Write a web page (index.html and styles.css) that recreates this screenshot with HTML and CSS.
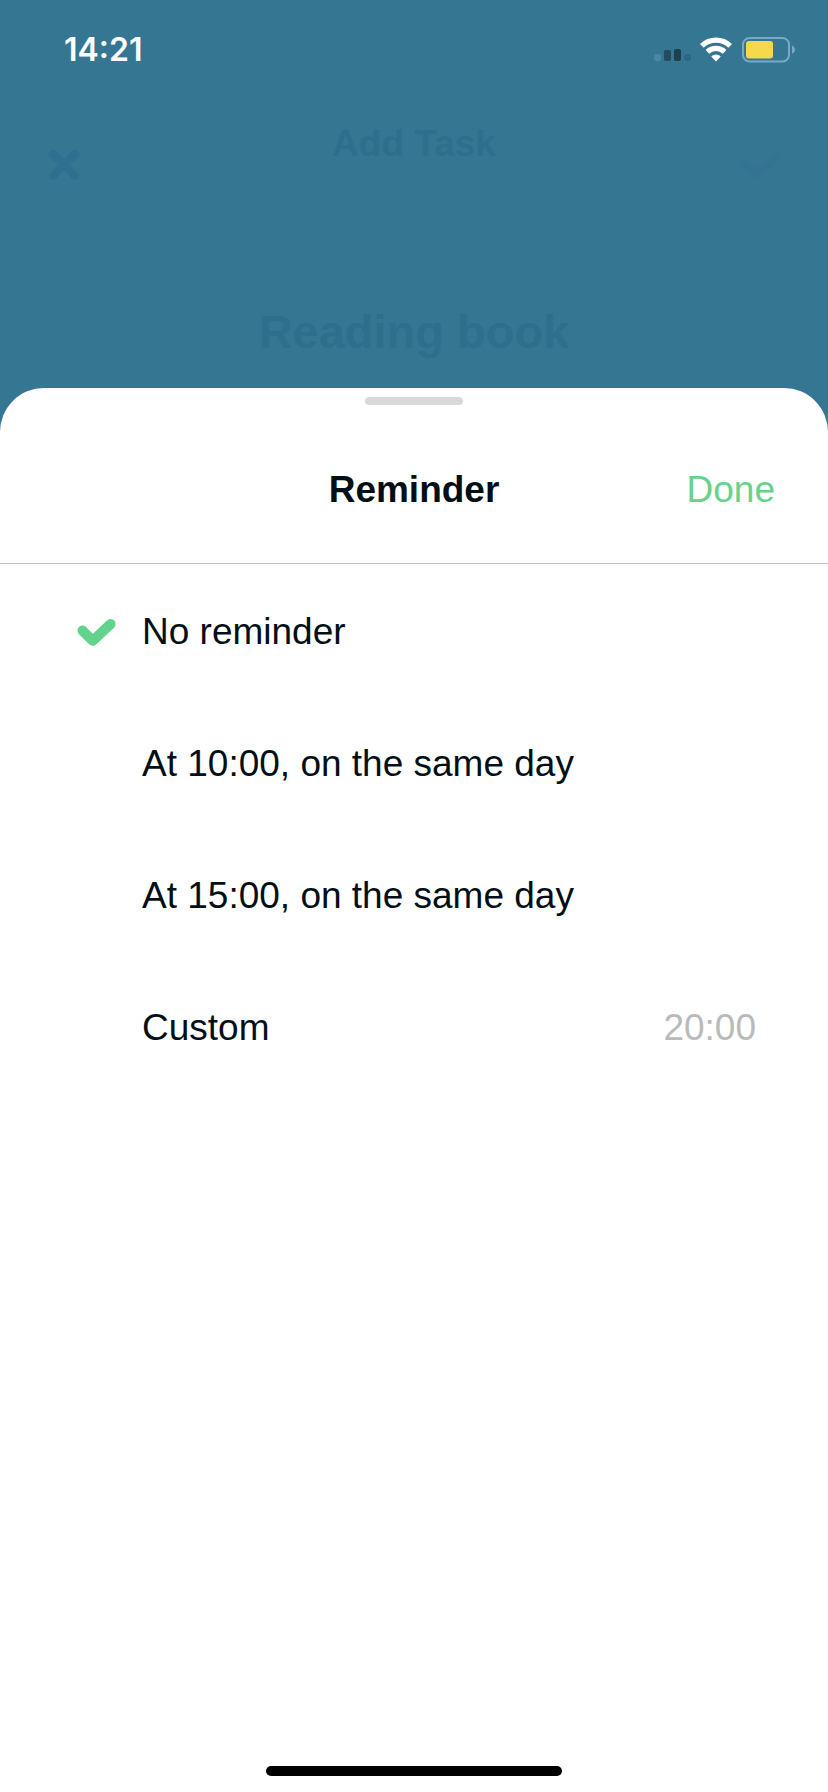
FILE: index.html
```html
<!DOCTYPE html>
<html lang="en">
<head>
<meta charset="utf-8">
<meta name="viewport" content="width=device-width, initial-scale=1">
<title>Reminder</title>
<link rel="stylesheet" href="styles.css">
</head>
<body>
<div class="screen">
  <header class="status-bar">
    <time class="clock">14:21</time>
    <div class="status-icons">
      <svg class="signal" width="38" height="26" viewBox="0 0 38 26" aria-hidden="true">
        <rect x="0" y="17" width="7" height="7" rx="2" fill="#4a87a3"/>
        <rect x="10" y="13" width="7" height="11" rx="2" fill="#234c60"/>
        <rect x="20" y="12" width="7" height="12" rx="2" fill="#1d3f50"/>
        <rect x="30" y="17" width="7" height="7" rx="3" fill="#2c6684"/>
      </svg>
      <svg class="wifi" width="32" height="26" viewBox="0 0 32 26" aria-hidden="true">
        <g fill="none" stroke="#fff" stroke-width="5.2">
          <path d="M1.8 8.8A20.4 20.4 0 0 1 30.2 8.8"/>
          <path d="M7.4 14.8A12.4 12.4 0 0 1 24.6 14.8"/>
        </g>
        <path d="M16 24.6L11.2 19.4A6.8 6.8 0 0 1 20.8 19.4Z" fill="#fff"/>
      </svg>
      <svg class="battery" width="54" height="26" viewBox="0 0 54 26" aria-hidden="true">
        <rect x="1" y="1" width="46" height="23.4" rx="6.5" fill="none" stroke="#78aac5" stroke-width="2"/>
        <rect x="4" y="4" width="27" height="17.4" rx="3" fill="#f5d94b"/>
        <path d="M50 8.6C54 10.4 54 15 50 16.8Z" fill="#78aac5"/>
      </svg>
    </div>
  </header>

  <section class="task">
    <div class="task-bar">
      <button class="task-action" type="button" aria-label="Close">
        <svg width="36" height="36" viewBox="0 0 36 36" aria-hidden="true">
          <path d="M7 7L29 29M29 7L7 29" fill="none" stroke="#2f6f90" stroke-width="8" stroke-linecap="round"/>
        </svg>
      </button>
      <h1 class="task-heading">Add Task</h1>
      <button class="task-action" type="button" aria-label="Save">
        <svg width="44" height="36" viewBox="0 0 44 36" aria-hidden="true">
          <path d="M6 17L19 27L38 11" fill="none" stroke="#347492" stroke-width="8" stroke-linecap="round" stroke-linejoin="round"/>
        </svg>
      </button>
    </div>
    <p class="task-name">Reading book</p>
  </section>

  <main class="sheet">
    <div class="handle"></div>
    <div class="sheet-header">
      <h2 class="sheet-title">Reminder</h2>
      <button class="done" type="button">Done</button>
    </div>
    <form class="options">
      <div class="option">
        <input class="option-radio" type="radio" name="reminder" id="none" checked>
        <label class="option-label" for="none">
          <svg class="tick" width="40" height="32" viewBox="0 0 40 32" aria-hidden="true">
            <path d="M6.5 14.6L16.7 24.8L34.6 8" fill="none" stroke="#62d38c" stroke-width="10" stroke-linecap="round" stroke-linejoin="round"/>
          </svg>
          <span>No reminder</span>
        </label>
      </div>
      <div class="option">
        <input class="option-radio" type="radio" name="reminder" id="ten">
        <label class="option-label" for="ten">
          <svg class="tick" width="40" height="32" viewBox="0 0 40 32" aria-hidden="true">
            <path d="M6.5 14.6L16.7 24.8L34.6 8" fill="none" stroke="#62d38c" stroke-width="10" stroke-linecap="round" stroke-linejoin="round"/>
          </svg>
          <span>At 10:00, on the same day</span>
        </label>
      </div>
      <div class="option">
        <input class="option-radio" type="radio" name="reminder" id="fifteen">
        <label class="option-label" for="fifteen">
          <svg class="tick" width="40" height="32" viewBox="0 0 40 32" aria-hidden="true">
            <path d="M6.5 14.6L16.7 24.8L34.6 8" fill="none" stroke="#62d38c" stroke-width="10" stroke-linecap="round" stroke-linejoin="round"/>
          </svg>
          <span>At 15:00, on the same day</span>
        </label>
      </div>
      <div class="option">
        <input class="option-radio" type="radio" name="reminder" id="custom">
        <label class="option-label" for="custom">
          <svg class="tick" width="40" height="32" viewBox="0 0 40 32" aria-hidden="true">
            <path d="M6.5 14.6L16.7 24.8L34.6 8" fill="none" stroke="#62d38c" stroke-width="10" stroke-linecap="round" stroke-linejoin="round"/>
          </svg>
          <span>Custom</span>
        </label>
        <button class="custom-time" type="button">20:00</button>
      </div>
    </form>
    <div class="home-indicator"></div>
  </main>
</div>
</body>
</html>
```

FILE: styles.css
```css
* {
  box-sizing: border-box;
}

body {
  margin: 0;
  background: #357693;
  color: #030f16;
  font-family: "Liberation Sans", Arial, sans-serif;
  font-size: 37px;
  line-height: 44px;
}

button {
  padding: 0;
  border: 0;
  background: none;
  color: inherit;
  font: inherit;
  cursor: pointer;
}

svg {
  display: block;
  flex: none;
}

h1,
h2,
p {
  margin: 0;
  font-size: inherit;
}

.screen {
  display: flex;
  flex-direction: column;
  min-height: 100vh;
}

.status-bar {
  display: flex;
  align-items: center;
  justify-content: space-between;
  height: 100px;
  padding: 0 32px 0 64px;
}

.clock {
  color: #fff;
  font-family: Inter, sans-serif;
  font-size: 32px;
  font-weight: 600;
}

.status-icons {
  display: flex;
  gap: 8px;
}

.wifi {
  margin-right: 2px;
}

.task {
  height: 288px;
  color: #2f6f8e;
  font-weight: 700;
  text-align: center;
}

.task-bar {
  display: grid;
  grid-template-columns: 44px 1fr 44px;
  align-items: start;
  padding: 22px 46px 0;
}

.task-action {
  margin-top: 25px;
}

.task-name {
  margin-top: 127px;
  font-size: 47px;
}

.sheet {
  display: flex;
  flex: 1;
  flex-direction: column;
  padding: 9px 0 16px;
  border-radius: 44px 44px 0 0;
  background: #fff;
}

.handle {
  align-self: center;
  width: 98px;
  height: 8px;
  border-radius: 4px;
  background: #d8dada;
}

.sheet-header {
  display: grid;
  grid-template-columns: 1fr auto 1fr;
  align-items: center;
  padding: 63px 53px 51px;
  border-bottom: 1px solid #bec2c3;
}

.sheet-title {
  grid-column: 2;
}

.done {
  justify-self: end;
  color: #67d28d;
}

.options {
  flex: 1;
  padding-top: 2px;
}

.option {
  display: flex;
  align-items: center;
  height: 132px;
  padding: 0 72px 0 76px;
}

.option-radio {
  width: 0;
  height: 0;
  margin: 0;
  appearance: none;
}

.option-label {
  display: flex;
  flex: 1;
  align-items: center;
  gap: 26px;
}

.tick {
  visibility: hidden;
}

.option-radio:checked + .option-label .tick {
  visibility: visible;
}

.custom-time {
  color: #b9bbbb;
}

.home-indicator {
  align-self: center;
  width: 296px;
  height: 10px;
  border-radius: 5px;
  background: #000;
}
```
